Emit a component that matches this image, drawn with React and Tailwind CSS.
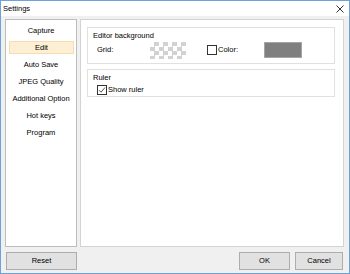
import React from 'react';

const menuItems = ['Capture', 'Edit', 'Auto Save', 'JPEG Quality', 'Additional Option', 'Hot keys', 'Program'];

const Checkbox = ({ checked }) => (
  <span className="w-[10px] h-[10px] border border-[#333333] bg-white flex items-center justify-center">
    {checked && (
      <svg width="8" height="8" viewBox="0 0 8 8">
        <path d="M1 4.2 L3 6.2 L7 1.5" fill="none" stroke="#444" strokeWidth="0.9" />
      </svg>
    )}
  </span>
);

const Button = ({ label, className }) => (
  <button className={`h-[18px] bg-[#e1e1e1] border border-[#adadad] flex items-center justify-center text-black ${className}`}>
    {label}
  </button>
);

export default function App() {
  return (
    <div
      className="w-[350px] h-[274px] border border-[#6ba3dc] bg-[#f0f0f0] flex flex-col text-[7.5px] text-black"
      style={{ fontFamily: '"Liberation Sans", Arial, sans-serif' }}
    >
      {/* title bar */}
      <div className="h-[15px] bg-white flex items-center justify-between pl-[2px] pr-[5px]">
        <span>Settings</span>
        <svg width="8" height="8" viewBox="0 0 8 8">
          <path d="M0.5 0.5 L7.5 7.5 M7.5 0.5 L0.5 7.5" stroke="#333" strokeWidth="1" />
        </svg>
      </div>

      <div className="flex-1 flex flex-col pt-[3px] pl-[4px] pr-[5px]">
        <div className="h-[228px] flex gap-[3px]">
          {/* menu list */}
          <div className="w-[72px] bg-white border border-[#bdbdbd] pt-[2px] flex flex-col">
            {menuItems.map((item) => (
              <div key={item} className="h-[17px] flex items-center">
                {item === 'Edit' ? (
                  <div className="ml-[3px] mr-[2px] flex-1 h-[13px] bg-[#fdefd3] border border-[#f6dcae] flex items-center justify-center">
                    {item}
                  </div>
                ) : (
                  <div className="flex-1 text-center">{item}</div>
                )}
              </div>
            ))}
          </div>

          {/* content */}
          <div className="flex-1 bg-white border border-[#d3d3d3] pt-[7px] pl-[6px] pr-[8px] flex flex-col gap-[5px]">
            <div className="h-[37px] border border-[#e0e0e0] flex flex-col">
              <div className="pl-[5px] pt-[3px] leading-[9px]">Editor background</div>
              <div className="flex items-center mt-[1px] h-[18px]">
                <span className="ml-[9px] w-[53px]">Grid:</span>
                <div className="w-[36px] h-[17px] bg-[repeating-conic-gradient(#d2d2d2_0_25%,#ffffff_0_50%)] bg-[length:9px_9px]" />
                <div className="ml-[21px] flex items-center gap-[1px]">
                  <Checkbox />
                  <span>Color:</span>
                </div>
                <div className="ml-[26px] w-[38px] h-[16px] bg-[#7f7f7f] border border-[#a5a5a5]" />
              </div>
            </div>

            <div className="h-[28px] border border-[#e0e0e0] flex flex-col">
              <div className="pl-[5px] pt-[3px] leading-[9px]">Ruler</div>
              <div className="flex items-center gap-[1px] ml-[9px] mt-[2px]">
                <Checkbox checked />
                <span>Show ruler</span>
              </div>
            </div>
          </div>
        </div>

        {/* bottom buttons */}
        <div className="mt-[5px] flex items-center">
          <Button label="Reset" className="ml-[1px] w-[71px]" />
          <div className="flex-1" />
          <Button label="OK" className="w-[51px]" />
          <Button label="Cancel" className="ml-[5px] mr-[1px] w-[48px]" />
        </div>
      </div>
    </div>
  );
}
